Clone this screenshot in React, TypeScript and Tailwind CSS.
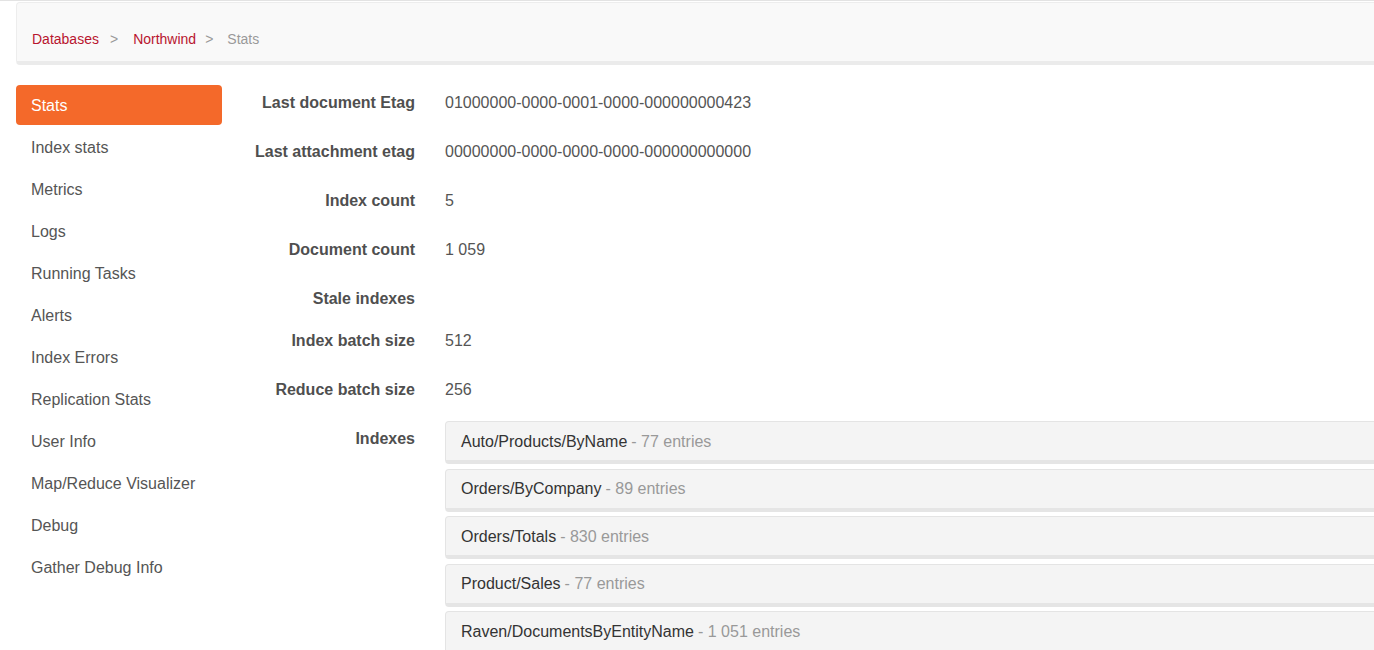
import React from "react";

const navItems = [
  "Stats",
  "Index stats",
  "Metrics",
  "Logs",
  "Running Tasks",
  "Alerts",
  "Index Errors",
  "Replication Stats",
  "User Info",
  "Map/Reduce Visualizer",
  "Debug",
  "Gather Debug Info",
];

const stats: { label: string; value: string; h: string }[] = [
  { label: "Last document Etag", value: "01000000-0000-0001-0000-000000000423", h: "h-[49px]" },
  { label: "Last attachment etag", value: "00000000-0000-0000-0000-000000000000", h: "h-[49px]" },
  { label: "Index count", value: "5", h: "h-[49px]" },
  { label: "Document count", value: "1 059", h: "h-[49px]" },
  { label: "Stale indexes", value: "", h: "h-[42px]" },
  { label: "Index batch size", value: "512", h: "h-[49px]" },
  { label: "Reduce batch size", value: "256", h: "h-[49px]" },
];

const indexes = [
  { name: "Auto/Products/ByName", entries: "77 entries" },
  { name: "Orders/ByCompany", entries: "89 entries" },
  { name: "Orders/Totals", entries: "830 entries" },
  { name: "Product/Sales", entries: "77 entries" },
  { name: "Raven/DocumentsByEntityName", entries: "1 051 entries" },
];

export default function App() {
  return (
    <div
      className="h-screen w-full overflow-hidden bg-white text-[16px] text-[#555]"
      style={{ fontFamily: '"Liberation Sans", Arial, sans-serif' }}
    >
      <div className="h-px w-full bg-[#e3e3e3]" />
      <div className="pl-[16px]">
        <div className="mt-px mr-[-12px] h-[63px] rounded-[4px] border border-[#ededed] border-b-4 border-b-[#ebebeb] bg-[#f9f9f9] pl-[15px] pt-[26px] text-[14px] leading-[20px]">
          <span className="text-[#b8152f]">Databases</span>
          <span className="ml-[11px] mr-[15px] text-[#999]">&gt;</span>
          <span className="text-[#b8152f]">Northwind</span>
          <span className="ml-[9px] mr-[14px] text-[#999]">&gt;</span>
          <span className="text-[#999]">Stats</span>
        </div>

        <div className="mt-[20px] flex">
          <div className="flex w-[206px] shrink-0 flex-col gap-[2px]">
            {navItems.map((item, i) => (
              <div
                key={item}
                className={
                  i === 0
                    ? "flex h-[40px] items-center rounded-[4px] bg-[#f4692a] px-[15px] pt-[2px] text-white"
                    : "flex h-[40px] items-center rounded-[4px] px-[15px] pt-[2px] text-[#555]"
                }
              >
                {item}
              </div>
            ))}
          </div>

          <div className="flex-1">
            {stats.map((s) => (
              <div key={s.label} className={`flex ${s.h} pt-[7px] leading-[21px]`}>
                <div className="w-[193px] shrink-0 text-right font-bold text-[#4f4f4f]">
                  {s.label}
                </div>
                <div className="ml-[30px] text-[#555]">{s.value}</div>
              </div>
            ))}
            <div className="flex">
              <div className="w-[193px] shrink-0 pt-[7px] text-right font-bold leading-[21px] text-[#4f4f4f]">
                Indexes
              </div>
              <div className="ml-[30px] mr-[-12px] flex-1">
                {indexes.map((ix) => (
                  <div
                    key={ix.name}
                    className="mb-[4.5px] flex h-[43px] items-center rounded-[4px] border border-[#e4e4e4] border-b-4 border-b-[#e5e5e5] bg-[#f4f4f4] pl-[15px] leading-[21px]"
                  >
                    <span className="text-[#333]">{ix.name}</span>
                    <span className="ml-[4px] text-[#999]">- {ix.entries}</span>
                  </div>
                ))}
              </div>
            </div>
          </div>
        </div>
      </div>
    </div>
  );
}
